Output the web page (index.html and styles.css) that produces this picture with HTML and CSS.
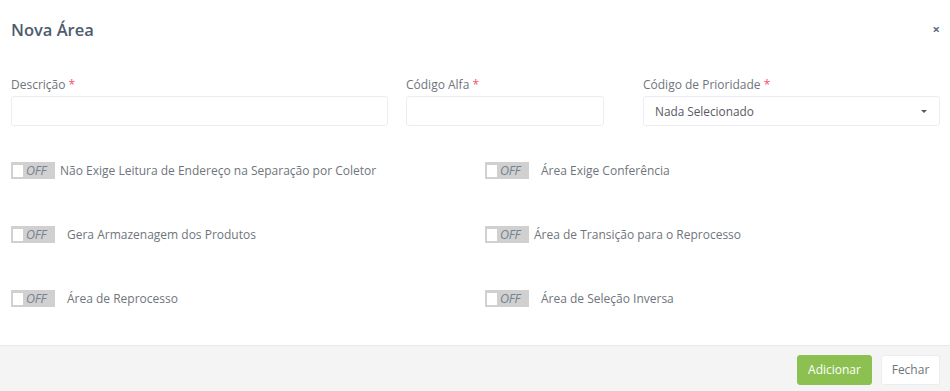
FILE: index.html
```html
<!DOCTYPE html>
<html>
<head>
    <meta charset="utf-8">
    <title>Nova Área</title>
    <link rel="stylesheet" href="styles.css">
</head>
<body>
    <div class="modal">
        <div class="modal-header">
            <h3 class="modal-title">Nova Área</h3>
            <span class="close">×</span>
        </div>
        <div class="modal-body">
            <div class="fields">
                <div class="field">
                    <label>Descrição <span class="req">*</span></label>
                    <input type="text" class="input">
                </div>
                <div class="field">
                    <label>Código Alfa <span class="req">*</span></label>
                    <input type="text" class="input alfa">
                </div>
                <div class="field">
                    <label>Código de Prioridade <span class="req">*</span></label>
                    <div class="input select">
                        <span>Nada Selecionado</span>
                        <span class="caret"></span>
                    </div>
                </div>
            </div>
            <div class="switches">
                <div class="switch-row">
                    <span class="switch"><span class="knob"></span><span class="off">OFF</span></span>
                    <span class="switch-label">Não Exige Leitura de Endereço na Separação por Coletor</span>
                </div>
                <div class="switch-row">
                    <span class="switch"><span class="knob"></span><span class="off">OFF</span></span>
                    <span class="switch-label wide">Área Exige Conferência</span>
                </div>
                <div class="switch-row">
                    <span class="switch"><span class="knob"></span><span class="off">OFF</span></span>
                    <span class="switch-label wide">Gera Armazenagem dos Produtos</span>
                </div>
                <div class="switch-row">
                    <span class="switch"><span class="knob"></span><span class="off">OFF</span></span>
                    <span class="switch-label">Área de Transição para o Reprocesso</span>
                </div>
                <div class="switch-row">
                    <span class="switch"><span class="knob"></span><span class="off">OFF</span></span>
                    <span class="switch-label wide">Área de Reprocesso</span>
                </div>
                <div class="switch-row">
                    <span class="switch"><span class="knob"></span><span class="off">OFF</span></span>
                    <span class="switch-label wide">Área de Seleção Inversa</span>
                </div>
            </div>
        </div>
        <div class="modal-footer">
            <button class="btn btn-success">Adicionar</button>
            <button class="btn btn-default">Fechar</button>
        </div>
    </div>
</body>
</html>
```
FILE: styles.css
```css
body{
    margin: 0;
    background: #fff;
    font-family: "Open Sans", "Noto Sans", sans-serif;
    color: #6f757c;
}
.modal{
    width: 950px;
    height: 391px;
    display: flex;
    flex-direction: column;
}
.modal-header{
    display: flex;
    justify-content: space-between;
    align-items: center;
    padding: 15px 10px 0 11px;
    height: 28px;
}
.modal-title{
    margin: 0;
    font-size: 16.5px;
    font-weight: 600;
    color: #4e5b6e;
}
.close{
    font-size: 13px;
    color: #5d6a82;
    font-weight: bold;
    line-height: 1;
}
.modal-body{
    flex: 1;
    padding: 34px 10px 0 11px;
}
.fields{
    display: grid;
    grid-template-columns: 377px 219px 297px;
    column-gap: 18px;
}
.field label{
    display: block;
    font-size: 12px;
    line-height: 16px;
    margin-bottom: 3px;
}
.req{
    color: #f4516c;
}
.input{
    display: block;
    box-sizing: border-box;
    width: 100%;
    height: 30px;
    border: 1px solid #ebedf2;
    border-radius: 3px;
    background: #fff;
    margin: 0;
}
.alfa{
    width: 198px;
}
.select{
    display: flex;
    align-items: center;
    justify-content: space-between;
    padding: 0 12px 0 11px;
    font-size: 11.8px;
    color: #575962;
}
.caret{
    width: 0;
    height: 0;
    border-left: 3px solid transparent;
    border-right: 3px solid transparent;
    border-top: 3px solid #575962;
}
.switches{
    display: grid;
    grid-template-columns: 474px 1fr;
    row-gap: 47px;
    margin-top: 36px;
}
.switch-row{
    display: flex;
    align-items: center;
    height: 17px;
}
.switch{
    display: flex;
    align-items: center;
    width: 44px;
    height: 17px;
    box-sizing: border-box;
    background: #d0d0d0;
    padding: 0 0 0 2px;
}
.knob{
    width: 10px;
    height: 12px;
    background: #fff;
}
.off{
    font-size: 12.5px;
    font-style: italic;
    color: #76818f;
    margin-left: 3px;
    letter-spacing: -0.3px;
}
.switch-label{
    font-size: 12px;
    margin-left: 5px;
}
.switch-label.wide{
    margin-left: 12px;
}
.modal-footer{
    height: 45px;
    border-top: 1px solid #e9e9e9;
    background: #f4f4f4;
    display: flex;
    justify-content: flex-end;
    align-items: center;
    padding: 0 10px 0 0;
    gap: 9px;
}
.btn{
    height: 30px;
    border-radius: 3px;
    font-family: "Open Sans", "Noto Sans", sans-serif;
    font-size: 12px;
    padding: 0 8px;
    margin-top: 2px;
}
.btn-success{
    background: #8cc152;
    border: 1px solid #8cc152;
    color: #fff;
    width: 75px;
}
.btn-default{
    background: #fff;
    border: 1px solid #ebedf2;
    color: #6f757c;
    width: 59px;
}
```
